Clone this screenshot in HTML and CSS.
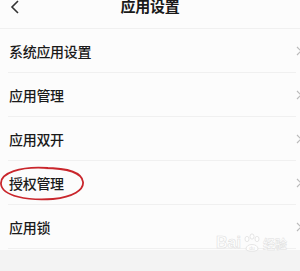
FILE: index.html
```html
<!DOCTYPE html>
<html lang="zh">
<head>
<meta charset="utf-8">
<link rel="stylesheet" href="styles.css">
</head>
<body>
<div class="screen">
  <header class="topbar">
    <svg class="back" width="10" height="14" viewBox="0 0 10 14"><path d="M8 1 L2 7 L8 13" fill="none" stroke="#333" stroke-width="1.6"/></svg>
    <h1 class="title">应用设置</h1>
  </header>
  <ul class="list">
    <li class="row"><span class="label">系统应用设置</span><svg class="chev" width="8" height="10" viewBox="0 0 8 10"><path d="M1 1 L5 5 L1 9" fill="none" stroke="#bbb" stroke-width="1.2"/></svg></li>
    <li class="row"><span class="label">应用管理</span><svg class="chev" width="8" height="10" viewBox="0 0 8 10"><path d="M1 1 L5 5 L1 9" fill="none" stroke="#bbb" stroke-width="1.2"/></svg></li>
    <li class="row"><span class="label">应用双开</span><svg class="chev" width="8" height="10" viewBox="0 0 8 10"><path d="M1 1 L5 5 L1 9" fill="none" stroke="#bbb" stroke-width="1.2"/></svg></li>
    <li class="row marked"><span class="label">授权管理</span><svg class="chev" width="8" height="10" viewBox="0 0 8 10"><path d="M1 1 L5 5 L1 9" fill="none" stroke="#bbb" stroke-width="1.2"/></svg>
      <svg class="circle" width="90" height="40" viewBox="0 0 90 40"><path d="M50 3 C 22 1, 2 8, 3 19 C 4 31, 30 36, 55 34 C 75 32, 86 25, 85 17 C 84 8, 70 3, 46 3" fill="none" stroke="#c9262c" stroke-width="1.8"/></svg>
    </li>
    <li class="row"><span class="label">应用锁</span><svg class="chev" width="8" height="10" viewBox="0 0 8 10"><path d="M1 1 L5 5 L1 9" fill="none" stroke="#bbb" stroke-width="1.2"/></svg></li>
  </ul>
  <div class="footer"></div>
  <div class="watermark"><span class="wm-bai">Bai</span><svg class="paw" width="20" height="20" viewBox="0 0 20 20"><g fill="#fff" stroke="#ddd" stroke-width="0.8"><ellipse cx="5" cy="6" rx="2" ry="2.6"/><ellipse cx="10" cy="3.5" rx="2" ry="2.6"/><ellipse cx="15" cy="6" rx="2" ry="2.6"/><path d="M4 16 C 4 10, 16 10, 16 16 C 16 19, 4 19, 4 16 Z"/></g><text x="10" y="17" font-size="5" text-anchor="middle" fill="#ddd" font-family="Liberation Sans">du</text></svg><span class="wm-jy">经验</span></div>
</div>
</body>
</html>
```

FILE: styles.css
```css
* { box-sizing: border-box; }
html, body { margin: 0; padding: 0; }
body {
  width: 300px;
  height: 271px;
  overflow: hidden;
  background: #fcfcfc;
  font-family: "Noto Sans CJK SC", "Noto Sans", sans-serif;
  color: #222;
}
.screen { position: relative; width: 300px; height: 271px; overflow: hidden; }
.topbar {
  height: 29px;
  position: relative;
  border-bottom: 1px solid #f0f0f0;
  display: flex;
  justify-content: center;
  align-items: flex-start;
}
.back { position: absolute; left: 10px; top: 0px; }
.title {
  margin: -4px 0 0 0;
  font-size: 15px;
  font-weight: 700;
  line-height: 20px;
  color: #1a1a1a;
  letter-spacing: -0.2px;
}
.list { list-style: none; margin: 0; padding: 0; }
.row {
  position: relative;
  height: 44px;
  margin-left: 8px;
  margin-right: 4px;
  border-bottom: 1px solid #f0f0f0;
  display: flex;
  align-items: center;
  padding-left: 1px;
}
.label { font-size: 14px; line-height: 16px; letter-spacing: -0.3px; color: #1a1a1a; font-weight: 500; }
.chev { position: absolute; right: -8px; top: 17px; }
.circle { position: absolute; left: -10px; top: 4px; }
.footer { height: 30px; background: #f3f3f3; margin-top: 1px; }
.watermark {
  position: absolute;
  left: 216px;
  top: 233px;
  display: flex;
  align-items: center;
  gap: 1px;
  opacity: 0.9;
}
.wm-bai {
  font-family: "Liberation Sans", sans-serif;
  font-weight: bold;
  font-size: 16px;
  color: #fff;
  -webkit-text-stroke: 0.6px #ddd;
}
.wm-jy {
  font-size: 12px;
  font-weight: bold;
  color: #fff;
  -webkit-text-stroke: 0.5px #ddd;
}
```
